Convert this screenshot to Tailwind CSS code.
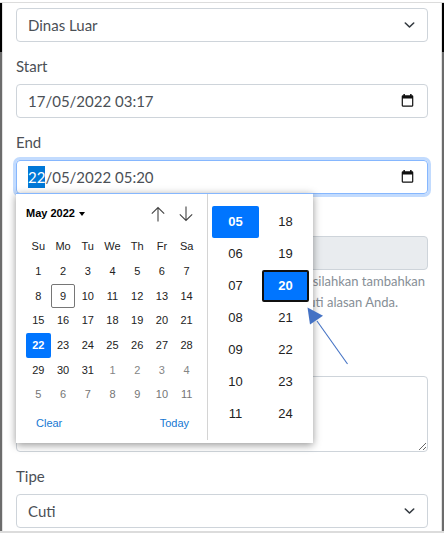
<!DOCTYPE html>
<html lang="id">
<head>
<meta charset="utf-8">
<meta name="viewport" content="width=device-width, initial-scale=1">
<title>Form Cuti</title>
<script src="https://cdn.jsdelivr.net/npm/@tailwindcss/browser@4"></script>
</head>
<body class="bg-white font-['Lato','Noto_Sans',sans-serif] text-[15px] text-[#4b5056]">
<div class="relative mt-[2px] flex border-y border-y-[#dcdcdc] border-b-2">
  <div class="flex w-[2px] shrink-0 flex-col"><div class="h-[49px] bg-black"></div><div class="flex-1 bg-[#6c6c6c]"></div></div>
  <form class="min-w-0 flex-1 border-x border-x-[#e2e2e2] px-[13px] pt-[5px] pb-[3px]">
    <div class="relative">
      <select aria-label="Jenis" class="block h-[34px] w-full appearance-none rounded border border-[#ced4da] bg-white px-[11px]"><option>Dinas Luar</option></select>
      <svg class="pointer-events-none absolute top-[12px] right-[13px] h-[10px] w-[11px]" viewBox="0 0 11 10" fill="none" stroke="#343a40" stroke-width="1.6" stroke-linecap="round" stroke-linejoin="round"><path d="M1.3 3 5.5 7 9.7 3"/></svg>
    </div>

    <div class="mt-[13px]">
      <label for="start" class="mb-[7px] block leading-[22px]">Start</label>
      <div class="flex h-[34px] items-center rounded border border-[#ced4da] pr-[13px] pl-[11px]">
        <input id="start" type="text" value="17/05/2022 03:17" class="min-w-0 flex-1 outline-none">
        <button type="button" aria-label="Pilih tanggal mulai"><svg class="block h-[14px] w-[13px]" viewBox="0 0 13 14"><path fill="#111" fill-rule="evenodd" d="M2.4 0h1.5v1.3h5.2V0h1.5v1.3h.6q1.100 0 1.100 1.100v9.200q0 1.100-1.100 1.100H1.800q-1.100 0-1.100-1.100V2.400q0-1.100 1.100-1.100h.6ZM1.900 4.400v7.100h9.200V4.400Z"/></svg></button>
      </div>
    </div>

    <div class="relative mt-[13px]">
      <label for="end" class="mb-[7px] block leading-[22px]">End</label>
      <div class="flex h-[34px] items-center rounded border border-[#86b7fe] pr-[13px] pl-[11px] ring-3 ring-[#c2dbfe]">
        <input id="end" type="text" value="22/05/2022 05:20" class="min-w-0 flex-1 outline-none selection:bg-[#0078d7] selection:text-white">
        <button type="button" aria-label="Pilih tanggal selesai"><svg class="block h-[14px] w-[13px]" viewBox="0 0 13 14"><path fill="#111" fill-rule="evenodd" d="M2.4 0h1.5v1.3h5.2V0h1.5v1.3h.6q1.100 0 1.100 1.100v9.200q0 1.100-1.100 1.100H1.800q-1.100 0-1.100-1.100V2.400q0-1.100 1.100-1.100h.6ZM1.900 4.400v7.100h9.200V4.400Z"/></svg></button>
      </div>

      <div class="absolute top-full left-0 z-10 -mt-px flex h-[250px] w-[297px] bg-white border-t border-t-[#86b7fe] font-['Liberation_Sans',sans-serif] text-[11px] text-[#222] shadow-[0_2px_8px_rgba(0,0,0,0.42)]">
        <div class="mb-[3px] w-[192px] border-r border-[#d4d4d4] pl-[10px]">
          <div class="flex h-[39px] items-center">
            <button type="button" class="flex items-center gap-1 font-bold text-black">May 2022 <svg class="h-[4px] w-[6px]" viewBox="0 0 6 4"><path d="M0 0h6L3 4Z"/></svg></button>
            <button type="button" aria-label="Bulan sebelumnya" class="mr-[14px] ml-auto"><svg class="block h-[16px] w-[14px]" viewBox="0 0 14 16" fill="none" stroke="#444" stroke-width="1.1"><path d="M7 15.5V1.5M.8 7.7 7 1.5l6.2 6.2"/></svg></button>
            <button type="button" aria-label="Bulan berikutnya" class="mr-[14px]"><svg class="block h-[16px] w-[14px]" viewBox="0 0 14 16" fill="none" stroke="#444" stroke-width="1.1"><path d="M7 .5v14M.8 8.3 7 14.5l6.2-6.2"/></svg></button>
          </div>
          <div class="grid h-[26px] w-[173px] grid-cols-7 items-center text-center"><span>Su</span><span>Mo</span><span>Tu</span><span>We</span><span>Th</span><span>Fr</span><span>Sa</span></div>
          <div class="grid h-[148px] w-[173px] grid-cols-7 grid-rows-6">
            <button type="button">1</button><button type="button">2</button><button type="button">3</button><button type="button">4</button><button type="button">5</button><button type="button">6</button><button type="button">7</button>
            <button type="button">8</button><button type="button" class="rounded-xs border border-[#767676]">9</button><button type="button">10</button><button type="button">11</button><button type="button">12</button><button type="button">13</button><button type="button">14</button>
            <button type="button">15</button><button type="button">16</button><button type="button">17</button><button type="button">18</button><button type="button">19</button><button type="button">20</button><button type="button">21</button>
            <button type="button" class="rounded-xs bg-[#0075ff] font-bold text-white">22</button><button type="button">23</button><button type="button">24</button><button type="button">25</button><button type="button">26</button><button type="button">27</button><button type="button">28</button>
            <button type="button">29</button><button type="button">30</button><button type="button">31</button><button type="button" class="text-[#858585]">1</button><button type="button" class="text-[#858585]">2</button><button type="button" class="text-[#858585]">3</button><button type="button" class="text-[#858585]">4</button>
            <button type="button" class="text-[#757575]">5</button><button type="button" class="text-[#757575]">6</button><button type="button" class="text-[#757575]">7</button><button type="button" class="text-[#757575]">8</button><button type="button" class="text-[#757575]">9</button><button type="button" class="text-[#757575]">10</button><button type="button" class="text-[#757575]">11</button>
          </div>
          <div class="flex h-[32px] items-center justify-between pr-[18px] pl-[10px] text-[#1677d2]"><button type="button">Clear</button><button type="button">Today</button></div>
        </div>
        <div class="flex flex-1 gap-[3px] px-[4px] pt-[12px] text-[13px]">
          <div class="grid flex-1 auto-rows-[32px]">
            <button type="button" class="rounded-xs bg-[#0075ff] font-bold text-white">05</button><button type="button">06</button><button type="button">07</button><button type="button">08</button><button type="button">09</button><button type="button">10</button><button type="button">11</button>
          </div>
          <div class="grid flex-1 auto-rows-[32px]">
            <button type="button">18</button><button type="button">19</button><button type="button" class="rounded-xs border-2 border-[#101010] bg-[#0075ff] font-bold text-white">20</button><button type="button">21</button><button type="button">22</button><button type="button">23</button><button type="button">24</button>
          </div>
        </div>
      </div>
    </div>

    <div class="mt-[42px]">
      <input aria-label="Kuota cuti" type="text" readonly class="block h-[34px] w-full rounded border border-[#ced4da] bg-[#e9ecef] px-[11px] outline-none">
      <p class="mt-px h-[63px] text-right text-[13px] leading-[21px] text-[#868e96]"><span class="block pr-[3px]">silahkan tambahkan</span><span class="block pr-[30px]">cuti alasan Anda.</span></p>
    </div>

    <div class="mt-[42px]">
      <textarea aria-label="Alasan" class="block h-[76px] w-full rounded border border-[#ced4da] bg-white px-[11px] outline-none"></textarea>
    </div>

    <div class="mt-[13px]">
      <label for="tipe" class="mb-[7px] block leading-[22px]">Tipe</label>
      <div class="relative">
        <select id="tipe" class="block h-[34px] w-full appearance-none rounded border border-[#ced4da] bg-white px-[11px]"><option>Cuti</option></select>
        <svg class="pointer-events-none absolute top-[12px] right-[13px] h-[10px] w-[11px]" viewBox="0 0 11 10" fill="none" stroke="#343a40" stroke-width="1.6" stroke-linecap="round" stroke-linejoin="round"><path d="M1.3 3 5.5 7 9.7 3"/></svg>
      </div>
    </div>
  </form>
  <div class="flex w-[2px] shrink-0 flex-col"><div class="h-[49px] bg-black"></div><div class="flex-1 bg-[#6c6c6c]"></div></div>
  <svg class="pointer-events-none absolute top-[304px] left-[307px] z-20 h-[60px] w-[44px]" viewBox="0 0 44 60" aria-hidden="true"><path d="M10 14 40.5 57" stroke="#4472c4" stroke-width="1.1"/><path d="M.5.5 16 8.7 3 17.5Z" fill="#4472c4"/></svg>
</div>
<script>
  const end = document.getElementById('end');
  end.focus();
  end.setSelectionRange(0, 2);
</script>
</body>
</html>
